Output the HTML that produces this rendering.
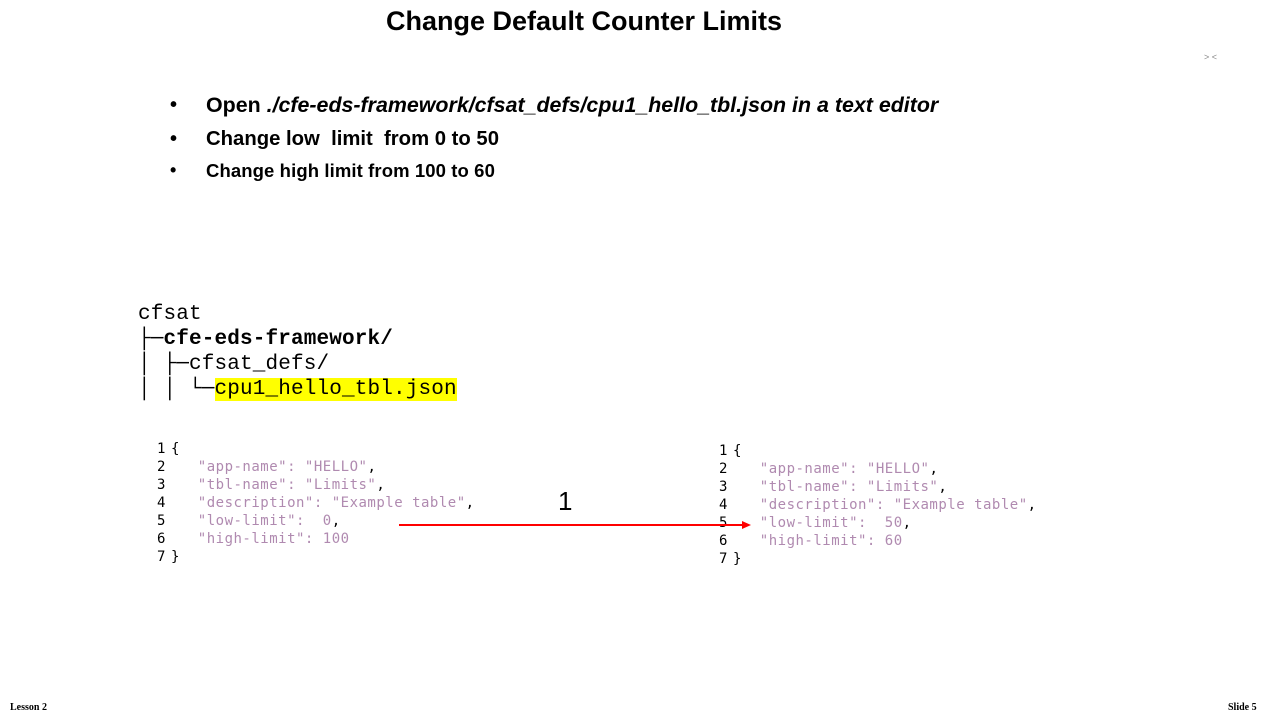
<!DOCTYPE html>
<html><head><meta charset="utf-8"><style>
body{margin:0;width:1280px;height:720px;background:#fff;position:relative;overflow:hidden;font-family:"Liberation Sans",sans-serif}
.a{position:absolute;white-space:pre}
.t{left:0;width:1168px;text-align:center;top:6px;font-size:27px;font-weight:bold}
.b{font-weight:bold;font-size:20px}
.tree{font-family:"Liberation Mono",monospace;font-size:21px;letter-spacing:0.15px;line-height:25px;left:138px;top:302px}
.code{font-family:"DejaVu Sans Mono",monospace;font-size:14px;letter-spacing:0.5px;line-height:18px;color:#b08ab0}
.n{color:#000;display:inline-block;width:14px}
.k{color:#000}
</style></head><body>
<div class="a t">Change Default Counter Limits</div>
<div class="a" style="left:1204px;top:52px;font-size:9px;color:#888">&gt; &lt;</div>
<div class="a b" style="left:170px;top:94px">•</div>
<div class="a b" style="left:206px;top:93px;font-size:21.4px">Open <i>./cfe-eds-framework/cfsat_defs/cpu1_hello_tbl.json in a text editor</i></div>
<div class="a b" style="left:170px;top:128px">•</div>
<div class="a b" style="left:206px;top:128px;font-size:20.3px">Change low  limit  from 0 to 50</div>
<div class="a" style="left:170px;top:160px;font-size:18px;font-weight:bold">•</div>
<div class="a" style="left:206px;top:160px;font-size:18.5px;font-weight:bold;letter-spacing:0.1px">Change high limit from 100 to 60</div>
<div class="a tree">cfsat
├─<b>cfe-eds-framework/</b>
│ ├─cfsat_defs/
│ │ └─<span style="background:#ff0">cpu1_hello_tbl.json</span></div>
<div class="a code" style="left:157px;top:440px"><span class="n">1</span><span class="k">{</span>
<span class="n">2</span>   "app-name": "HELLO"<span class="k">,</span>
<span class="n">3</span>   "tbl-name": "Limits"<span class="k">,</span>
<span class="n">4</span>   "description": "Example table"<span class="k">,</span>
<span class="n">5</span>   "low-limit":  0<span class="k">,</span>
<span class="n">6</span>   "high-limit": 100
<span class="n">7</span><span class="k">}</span></div>
<div class="a code" style="left:719px;top:442px"><span class="n">1</span><span class="k">{</span>
<span class="n">2</span>   "app-name": "HELLO"<span class="k">,</span>
<span class="n">3</span>   "tbl-name": "Limits"<span class="k">,</span>
<span class="n">4</span>   "description": "Example table"<span class="k">,</span>
<span class="n">5</span>   "low-limit":  50<span class="k">,</span>
<span class="n">6</span>   "high-limit": 60
<span class="n">7</span><span class="k">}</span></div>
<div class="a" style="left:558px;top:486px;font-size:26px">1</div>
<svg class="a" style="left:0;top:0" width="1280" height="720"><line x1="399" y1="525" x2="744" y2="525" stroke="#f00" stroke-width="2"/><polygon points="751,525 742,521 742,529" fill="#f00"/></svg>
<div class="a" style="left:10px;top:702px;font-family:'Liberation Serif',serif;font-size:10px;font-weight:bold">Lesson 2</div>
<div class="a" style="left:1228px;top:702px;font-family:'Liberation Serif',serif;font-size:10px;font-weight:bold">Slide 5</div>
</body></html>
